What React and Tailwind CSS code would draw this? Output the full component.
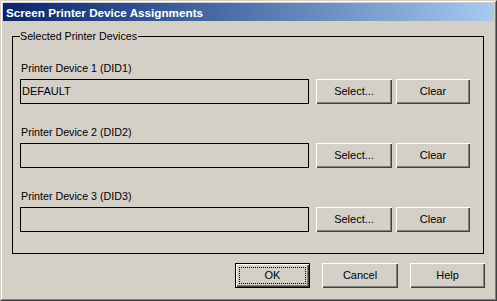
import React from "react";

const font = { fontFamily: '"Liberation Sans", Arial, sans-serif' };

function Btn({ children, w = "w-[75px]" }) {
  return (
    <div
      className={`${w} h-[25px] flex items-center justify-center bg-[#d4d0c8] text-[11px] text-black shadow-[inset_1px_1px_#ffffff,inset_-1px_-1px_#404040,inset_-2px_-2px_#808080]`}
    >
      {children}
    </div>
  );
}

function DefaultBtn({ children }) {
  return (
    <div className="w-[75px] h-[25px] border border-black bg-[#d4d0c8] flex">
      <div className="flex-1 p-[3px] shadow-[inset_1px_1px_#ffffff,inset_-1px_-1px_#404040,inset_-2px_-2px_#808080] flex">
        <div className="flex-1 border border-dotted border-black flex items-center justify-center text-[11px] text-black">
          {children}
        </div>
      </div>
    </div>
  );
}

function Row({ label, value }) {
  return (
    <div className="flex flex-col">
      <div className="h-[13px] leading-[13px] text-[10.7px] text-black pl-[1px]">{label}</div>
      <div className="flex mt-[4px]">
        <div className="w-[289px] h-[25px] border border-black flex items-center pl-[1px] text-[11px] text-black">
          {value}
        </div>
        <div className="ml-[7px] flex gap-[4px]">
          <Btn w="w-[76px]">Select...</Btn>
          <Btn w="w-[74px]">Clear</Btn>
        </div>
      </div>
    </div>
  );
}

export default function App() {
  return (
    <div style={font} className="w-[497px] h-[301px] border border-t-[#d4d0c8] border-l-[#d4d0c8] border-b-[#404040] border-r-[#404040] bg-[#d4d0c8]">
      <div className="h-full border border-t-white border-l-white border-b-[#808080] border-r-[#808080] p-[1px] flex flex-col">
        <div className="h-[18px] bg-gradient-to-r from-[#0a246a] to-[#a6caf0] flex items-center pl-[3px]">
          <span className="text-white font-bold text-[11.7px] leading-[13px]">Screen Printer Device Assignments</span>
        </div>
        <fieldset className="ml-[9px] mt-[9px] w-[472px] h-[224px] border border-black px-[7px] pt-[19px] pb-0 m-0">
          <legend className="ml-0 pl-0 pr-[1px] text-[10.7px] leading-[13px] text-black">Selected Printer Devices</legend>
          <div className="flex flex-col gap-[22px]">
            <Row label="Printer Device 1 (DID1)" value="DEFAULT" />
            <Row label="Printer Device 2 (DID2)" value="" />
            <Row label="Printer Device 3 (DID3)" value="" />
          </div>
        </fieldset>
        <div className="flex mt-[9px] ml-[232px] gap-[12px]">
          <DefaultBtn>OK</DefaultBtn>
          <Btn w="w-[76px]">Cancel</Btn>
          <Btn w="w-[75px]">Help</Btn>
        </div>
      </div>
    </div>
  );
}
